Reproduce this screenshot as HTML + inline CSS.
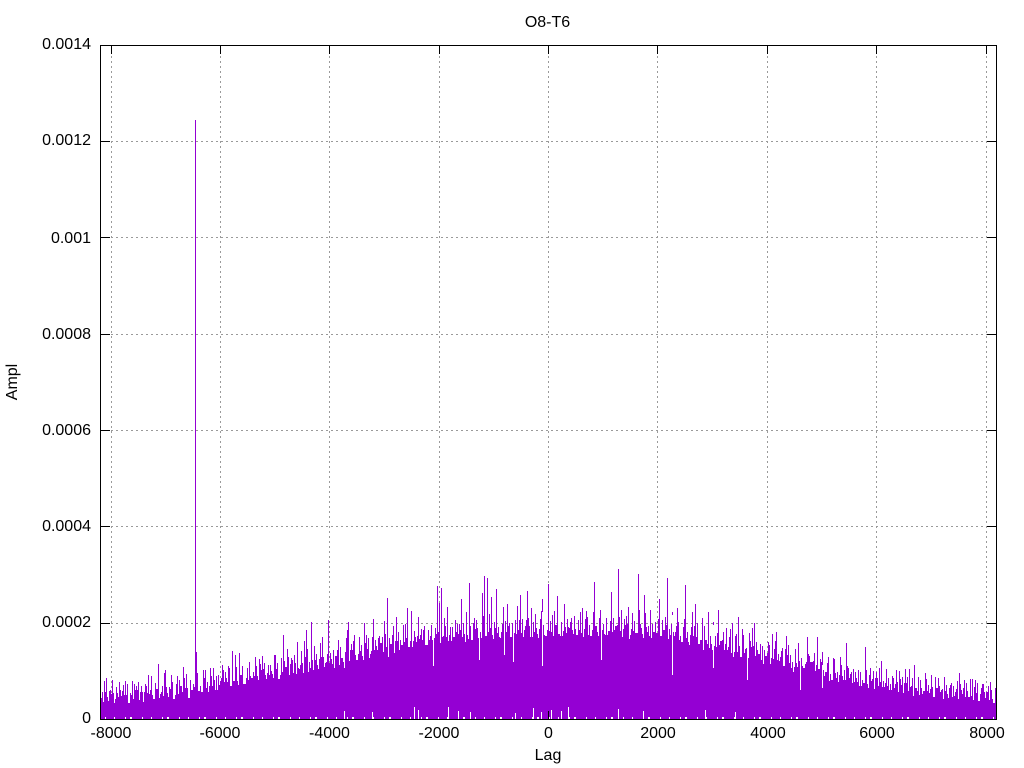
<!DOCTYPE html>
<html>
<head>
<meta charset="utf-8">
<title>O8-T6</title>
<style>
html,body{margin:0;padding:0;background:#fff;width:1024px;height:768px;overflow:hidden}
svg{display:block}
text{font-family:"Liberation Sans",sans-serif;font-size:16px;fill:#000}
</style>
</head>
<body>
<svg width="1024" height="768" viewBox="0 0 1024 768" xmlns="http://www.w3.org/2000/svg">
<defs>
<clipPath id="c"><rect x="101" y="46" width="895" height="673"/></clipPath>
<pattern id="p1" width="5" height="10" patternUnits="userSpaceOnUse"><rect x="0" width="3" height="10" fill="#9400d3"/></pattern>
<pattern id="p2" width="7" height="10" patternUnits="userSpaceOnUse"><rect x="1" width="1" height="10" fill="#9400d3"/><rect x="4" width="1" height="10" fill="#9400d3"/></pattern>
<pattern id="p3" width="13" height="10" patternUnits="userSpaceOnUse"><rect x="2" width="1" height="10" fill="#9400d3"/><rect x="8" width="1" height="10" fill="#9400d3"/></pattern>
<pattern id="w" width="37" height="10" patternUnits="userSpaceOnUse"><rect x="3" width="1" height="10" fill="#fff"/><rect x="14" width="1" height="10" fill="#fff"/><rect x="19" width="2" height="10" fill="#fff"/><rect x="31" width="1" height="10" fill="#fff"/></pattern>
<path id="sil" d="M101 719V698
h3V692h3V697h3V694h3V699h3V693h3V696h3V691h3V695h3V699h3
V695h3V690h3V696h3V692h3V698h3V693h3V690h3V695h3V689h3V694h3
V692h3V687h3V693h3V689h3V695h3V690h3V686h3V692h3V688h3V694h3
V690h3V683h3V687h3V692h3V684h3V688h3V682h3V686h3V690h3V681h3
V684h3V678h3V682h3V686h3V677h3V681h3V675h3V680h3V684h3V676h3
V678h3V672h3V676h3V670h3V675h3V679h3V671h3V674h3V669h3V675h3
V672h3V667h3V671h3V664h3V669h3V674h3V665h3V669h3V663h3V668h3
V666h3V660h3V665h3V657h3V663h3V668h3V659h3V664h3V656h3V661h3
V658h3V652h3V657h3V650h3V655h3V660h3V651h3V656h3V649h3V654h3
V651h3V646h3V650h3V643h3V648h3V653h3V644h3V649h3V641h3V646h3
V645h3V638h3V643h3V647h3V637h3V642h3V635h3V640h3V645h3V636h3
V640h3V634h3V638h3V643h3V632h3V637h3V641h3V633h3V638h3V630h3
V637h3V630h3V635h3V640h3V629h3V634h3V638h3V630h3V636h3V628h3
V635h3V628h3V633h3V638h3V627h3V632h3V637h3V629h3V634h3V626h3
V633h3V626h3V632h3V637h3V628h3V634h3V625h3V631h3V636h3V627h3
V632h3V625h3V630h3V636h3V627h3V633h3V624h3V630h3V635h3V626h3
V633h3V625h3V631h3V636h3V626h3V632h3V624h3V630h3V635h3V627h3
V632h3V626h3V631h3V637h3V625h3V630h3V635h3V627h3V633h3V624h3
V634h3V627h3V632h3V638h3V628h3V633h3V636h3V626h3V631h3V635h3
V638h3V632h3V636h3V642h3V633h3V638h3V641h3V632h3V637h3V640h3
V646h3V640h3V644h3V650h3V642h3V647h3V641h3V646h3V650h3V643h3
V653h3V648h3V652h3V657h3V649h3V654h3V647h3V652h3V656h3V650h3
V660h3V656h3V659h3V664h3V655h3V660h3V657h3V662h3V655h3V659h3
V668h3V663h3V667h3V672h3V664h3V668h3V662h3V667h3V671h3V665h3
V676h3V672h3V677h3V680h3V673h3V678h3V671h3V676h3V680h3V674h3
V683h3V678h3V682h3V686h3V679h3V684h3V681h3V685h3V678h3V682h3
V687h3V683h3V686h3V690h3V684h3V688h3V685h3V689h3V683h3V687h3
V692h3V688h3V691h3V694h3V687h3V691h3V689h3V693h3V688h3V692h3
V695h3V691h3V694h3V697h3V692h3V695h3V690h3V694h3V697h3V693h3
V696h3V693h3V697h3V694h3V698h3V692h3V696h3V699h3V694h3V697h3V719Z"/>
</defs>
<rect width="1024" height="768" fill="#fff"/>
<path fill="none" stroke="#9a9a9a" stroke-width="1" stroke-dasharray="2 3" d="M111.5 46V719M220.5 46V719M329.5 46V719M439.5 46V719M548.5 46V719M657.5 46V719M767.5 46V719M876.5 46V719M986.5 46V719M101 141.5H996M101 237.5H996M101 334.5H996M101 430.5H996M101 526.5H996M101 623.5H996"/>
<path fill="none" stroke="#000" stroke-width="1" d="M111.5 46v8M220.5 46v8M329.5 46v8M439.5 46v8M548.5 46v8M657.5 46v8M767.5 46v8M876.5 46v8M986.5 46v8M548.5 719v-8M101 141.5h9M101 237.5h9M101 334.5h9M101 430.5h9M101 526.5h9M101 623.5h9M996 141.5h-9M996 237.5h-9M996 334.5h-9M996 430.5h-9M996 526.5h-9M996 623.5h-9"/>
<g clip-path="url(#c)">
<use href="#sil" transform="translate(0,-14)" fill="url(#p3)"/>
<use href="#sil" transform="translate(0,-6)" fill="url(#p2)"/>
<use href="#sil" fill="url(#p1)"/>
<use href="#sil" transform="translate(0,4)" fill="#9400d3"/>
<!-- spikes -->
<path fill="none" stroke="#9400d3" stroke-width="1" d="M104.5 719V681M110.5 719V690M119.5 719V684M127.5 719V684M136.5 719V686M146.5 719V686M148.5 719V675M158.5 719V664M165.5 719V670M172.5 719V682M183.5 719V667M186.5 719V674M196.5 719V652M205.5 719V670M213.5 719V668M222.5 719V665M228.5 719V666M232.5 719V651M235.5 719V655M239.5 719V653M247.5 719V668M255.5 719V657M259.5 719V659M264.5 719V663M274.5 719V655M283.5 719V635M287.5 719V649M292.5 719V660M297.5 719V642M304.5 719V641M306.5 719V630M311.5 719V622M316.5 719V655M322.5 719V637M328.5 719V620M330.5 719V653M338.5 719V640M347.5 719V630M348.5 719V622M354.5 719V635M359.5 719V642M364.5 719V623M368.5 719V638M373.5 719V619M378.5 719V638M384.5 719V621M387.5 719V598M393.5 719V626M396.5 719V617M403.5 719V625M407.5 719V608M411.5 719V611M418.5 719V617M423.5 719V630M431.5 719V625M437.5 719V586M439.5 719V603M441.5 719V588M447.5 719V607M455.5 719V620M461.5 719V599M466.5 719V612M469.5 719V583M474.5 719V618M482.5 719V593M484.5 719V576M487.5 719V578M491.5 719V597M496.5 719V589M503.5 719V607M507.5 719V604M512.5 719V625M517.5 719V606M520.5 719V595M527.5 719V591M531.5 719V608M535.5 719V620M542.5 719V599M548.5 719V584M552.5 719V615M557.5 719V596M564.5 719V604M570.5 719V622M582.5 719V608M586.5 719V611M594.5 719V582M600.5 719V612M606.5 719V618M611.5 719V592M618.5 719V569M621.5 719V610M628.5 719V607M638.5 719V574M644.5 719V595M650.5 719V610M659.5 719V599M667.5 719V578M672.5 719V612M677.5 719V608M685.5 719V585M692.5 719V612M695.5 719V604M702.5 719V618M708.5 719V612M713.5 719V622M718.5 719V610M726.5 719V628M732.5 719V623M735.5 719V636M738.5 719V617M742.5 719V629M747.5 719V640M752.5 719V628M754.5 719V623M762.5 719V647M768.5 719V642M772.5 719V634M776.5 719V632M786.5 719V636M790.5 719V655M798.5 719V643M807.5 719V637M812.5 719V662M817.5 719V637M822.5 719V652M828.5 719V657M833.5 719V658M841.5 719V670M846.5 719V643M851.5 719V672M858.5 719V670M865.5 719V647M870.5 719V668M881.5 719V661M888.5 719V678M896.5 719V670M902.5 719V677M909.5 719V669M914.5 719V665M920.5 719V680M926.5 719V679M935.5 719V677M941.5 719V690M950.5 719V685M959.5 719V673M966.5 719V683M972.5 719V679M975.5 719V680M982.5 719V684M990.5 719V688"/>
<!-- white gaps -->
<path fill="none" stroke="#fff" stroke-width="1" d="M344.5 640V668M433.5 612V666M465.5 612V642M479.5 612V660M504.5 612V655M513.5 612V662M542.5 612V666M601.5 612V660M672.5 615V675M713.5 625V668M747.5 635V680M800.5 655V690M822.5 665V688"/>
<rect x="101" y="717" width="895" height="2" fill="url(#w)"/>
<path fill="none" stroke="#fff" stroke-width="1" d="M344.5 719v-8M372.5 719v-7M414.5 719v-12M418.5 719v-9M448.5 719v-12M458.5 719v-8M470.5 719v-7M515.5 719v-6M533.5 719v-11M541.5 719v-7M551.5 719v-9M561.5 719v-8M568.5 719v-12M618.5 719v-10M643.5 719v-8M705.5 719v-9M735.5 719v-7"/>
</g>
<!-- main spike -->
<path fill="none" stroke="#9400d3" stroke-width="1" d="M195.5 719V120"/>
<path fill="none" stroke="#000" stroke-width="1" d="M548.5 719v-8"/>
<rect x="100.5" y="45.5" width="896" height="674" fill="none" stroke="#000" stroke-width="1"/>
<text x="547.5" y="27" text-anchor="middle">O8-T6</text>
<text x="91" y="49" text-anchor="end">0.0014</text>
<text x="91" y="145" text-anchor="end">0.0012</text>
<text x="91" y="243" text-anchor="end">0.001</text>
<text x="91" y="339" text-anchor="end">0.0008</text>
<text x="91" y="435" text-anchor="end">0.0006</text>
<text x="91" y="531" text-anchor="end">0.0004</text>
<text x="91" y="627" text-anchor="end">0.0002</text>
<text x="91" y="723" text-anchor="end">0</text>
<text x="111" y="738" text-anchor="middle">-8000</text>
<text x="220" y="738" text-anchor="middle">-6000</text>
<text x="329.5" y="738" text-anchor="middle">-4000</text>
<text x="439" y="738" text-anchor="middle">-2000</text>
<text x="548.5" y="738" text-anchor="middle">0</text>
<text x="658" y="738" text-anchor="middle">2000</text>
<text x="768" y="738" text-anchor="middle">4000</text>
<text x="877" y="738" text-anchor="middle">6000</text>
<text x="987" y="738" text-anchor="middle">8000</text>
<text x="548" y="760" text-anchor="middle">Lag</text>
<text transform="translate(17 382) rotate(-90)" text-anchor="middle">Ampl</text>
</svg>
</body>
</html>
